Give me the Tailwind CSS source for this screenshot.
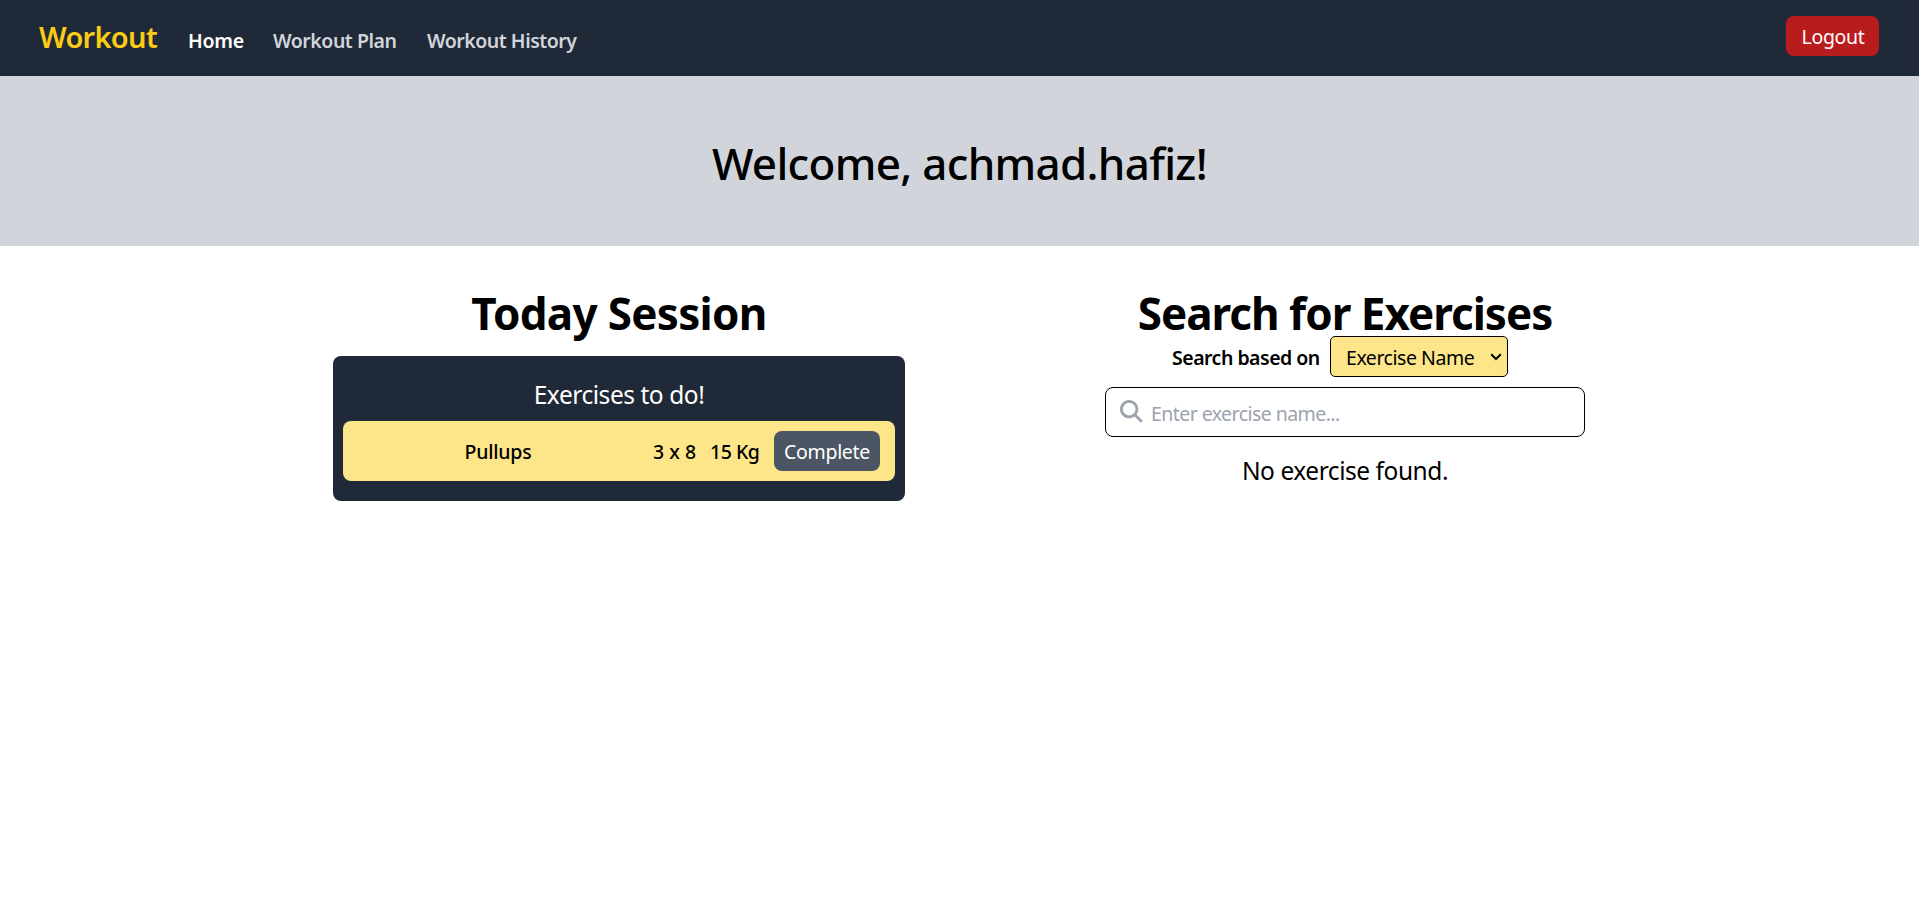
<!DOCTYPE html>
<html lang="en">
<head>
<meta charset="utf-8">
<title>Workout</title>
<script src="https://cdn.jsdelivr.net/npm/@tailwindcss/browser@4"></script>
</head>
<body class="bg-white text-black font-['Noto_Sans','Open_Sans',sans-serif] text-[19.5px] leading-[31px] whitespace-nowrap">
<header class="flex h-[76px] items-start justify-between bg-[#1f2937] px-10 pt-4">
  <nav class="flex items-baseline gap-[30px] font-semibold text-[#d1d5db]">
    <a class="-ml-px mr-px w-[118px] text-[29px] leading-[41px] tracking-[-0.68px] text-[#facc15]">Workout</a>
    <a class="w-[55px] tracking-[-0.25px] text-white">Home</a>
    <a class="w-[124px] tracking-[-0.46px]">Workout Plan</a>
    <a class="w-[150px] tracking-[-0.47px]">Workout History</a>
  </nav>
  <button class="h-10 w-[93px] rounded-lg bg-[#b91c1c] pl-px tracking-[-0.33px] text-white">Logout</button>
</header>
<section class="flex h-[170px] justify-center bg-[#d1d5db] pt-[60px]">
  <h1 class="h-[50px] text-[44px] font-medium leading-[55px] tracking-[-0.7px]">Welcome, achmad.hafiz!</h1>
</section>
<main class="flex items-start gap-[200px] pl-[333px] pt-10">
  <section class="w-[572px]">
    <h2 class="h-[50px] text-center text-[44px] font-bold leading-[55px] tracking-[-0.7px]">Today Session</h2>
    <div class="mt-5 rounded-lg bg-[#1f2937] px-2.5 py-5">
      <p class="h-[35px] text-center text-[24.5px] leading-[38px] tracking-[-0.45px] text-white">Exercises to do!</p>
      <div class="mt-2.5 flex h-[60px] items-center gap-[15px] rounded-lg bg-[#fde68a] pr-[15px] font-medium">
        <span class="-mr-[15px] flex-1 text-center tracking-[-0.2px]">Pullups</span>
        <span class="w-[43px]">3 x 8</span>
        <span class="-ml-px mr-px w-[48px] tracking-[-0.5px]">15 Kg</span>
        <button class="h-10 w-[106px] rounded-lg bg-[#4b5563] font-normal tracking-[-0.3px] text-white">Complete</button>
      </div>
    </div>
  </section>
  <section class="w-[480px]">
    <h2 class="h-[50px] text-center text-[44px] font-bold leading-[55px] tracking-[-1px]">Search for Exercises</h2>
    <div class="flex h-[41px] items-center pl-[66px]">
      <label for="by" class="w-[159px] pl-px pt-0.5 font-semibold tracking-[-0.5px]">Search based on</label>
      <div class="relative h-[41px] w-[178px]">
        <select id="by" class="block h-[41px] w-[178px] appearance-none rounded-[5px] border border-black bg-[#fde68a] pl-[15px] pt-px tracking-[-0.46px]"><option>Exercise Name</option></select>
        <svg class="pointer-events-none absolute right-[6px] top-[17px]" width="12" height="8" viewBox="0 0 12 8" fill="none" stroke="#000" stroke-width="2"><path d="M1.2 1.2 6 6l4.8-4.8"/></svg>
      </div>
    </div>
    <div class="mt-2.5 flex h-[50px] items-start rounded-lg border border-black pl-[14px] pt-3">
      <svg class="shrink-0" width="22.5" height="22.5" viewBox="0 0 512 512" fill="#9ca3af"><path d="M416 208c0 45.9-14.9 88.3-40 122.7L502.6 457.4c12.5 12.5 12.5 32.8 0 45.3s-32.8 12.5-45.3 0L330.7 376c-34.4 25.2-76.8 40-122.7 40C93.1 416 0 322.9 0 208S93.1 0 208 0S416 93.1 416 208zM208 352a144 144 0 1 0 0-288 144 144 0 1 0 0 288z"/></svg>
      <input class="-mt-0.5 ml-[8.5px] h-[31px] w-[420px] tracking-[-0.56px] outline-none placeholder:text-[#9ca3af]" placeholder="Enter exercise name...">
    </div>
    <p class="mt-[15px] h-[35px] text-center text-[24.5px] leading-[38px] tracking-[-0.45px]">No exercise found.</p>
  </section>
</main>
</body>
</html>
